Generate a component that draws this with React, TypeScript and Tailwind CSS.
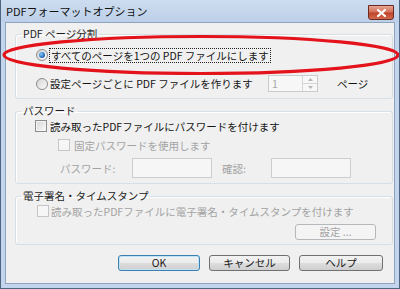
import type { ReactNode } from "react";

const FONT = "font-['Noto_Sans_CJK_JP','Noto_Sans',sans-serif]";

type BoxProps = {
  disabled?: boolean;
};

const CheckBox = ({ disabled }: BoxProps) => (
  <span
    className={
      disabled
        ? "w-[12px] h-[12px] shrink-0 border border-[#c6c6c6] bg-[#f6f6f6]"
        : "w-[12px] h-[12px] shrink-0 border border-[#8c8c8c] bg-gradient-to-br from-[#d6d6d6] to-[#fafafa] shadow-[inset_0_0_0_1px_#f4f4f4]"
    }
  />
);

const Radio = ({ checked }: { checked?: boolean }) => (
  <span className="w-[12px] h-[12px] shrink-0 rounded-full border border-[#8c8c8c] bg-gradient-to-br from-[#d4d4d4] to-[#fbfbfb] flex items-center justify-center">
    {checked && (
      <span className="w-[6px] h-[6px] rounded-full bg-[radial-gradient(circle_at_35%_35%,#8cc8f6_0%,#2f75c2_55%,#1b4e92_100%)]" />
    )}
  </span>
);

type GroupProps = {
  title: string;
  className: string;
  children: ReactNode;
};

const Group = ({ title, className, children }: GroupProps) => (
  <fieldset
    className={`ml-[9px] mr-[1px] border border-[#d5dfe5] rounded-[3px] shadow-[inset_1px_1px_0_#fff] ${className}`}
  >
    <legend className="ml-[5px] px-[2px] h-[12px] leading-[12px] text-[#1e1e1e]">
      {title}
    </legend>
    {children}
  </fieldset>
);

type BtnProps = {
  label: string;
  primary?: boolean;
  disabled?: boolean;
  width: string;
};

const Button = ({ label, primary, disabled, width }: BtnProps) => {
  let cls = "border-[#707070] bg-[linear-gradient(#f2f2f2_0%,#ebebeb_50%,#dddddd_51%,#cfcfcf_100%)] text-[#1a1a1a]";
  if (primary) {
    cls = "border-[#3c7fb1] bg-[linear-gradient(#f2f2f2_0%,#ebebeb_50%,#dddddd_51%,#cfcfcf_100%)] text-[#1a1a1a] shadow-[inset_0_0_0_1px_#bfe3f7]";
  }
  if (disabled) {
    cls = "border-[#b5b8ba] bg-[#f4f4f4] text-[#a3a3a3]";
  }
  return (
    <div
      className={`${width} h-[16px] border rounded-[3px] flex items-center justify-center leading-[12px] ${cls}`}
    >
      {label}
    </div>
  );
};

const App = () => {
  return (
    <div
      className={`relative w-[400px] h-[289px] overflow-hidden bg-[#c3d5ec] border-x border-b border-[#4f6580] flex flex-col text-[10.5px] ${FONT}`}
    >
      {/* title bar */}
      <div className="h-[22px] shrink-0 flex items-start pl-[5px] pr-[5px] bg-gradient-to-b from-[#cddcef] to-[#bdd0e9]">
        <span className="mt-[5px] text-[11px] leading-[13px] text-[#111]">PDFフォーマットオプション</span>
        <div className="ml-auto mt-[5px] w-[26px] h-[15px] rounded-b-[3px] border border-[#6a2a20] bg-[linear-gradient(#e8a593_0%,#d5705a_45%,#c0442a_55%,#d26a4f_100%)] flex items-center justify-center">
          <svg width="9" height="8" viewBox="0 0 9 8">
            <path d="M1 1 L8 7 M8 1 L1 7" stroke="#fff" strokeWidth="2.2" strokeLinecap="square" />
          </svg>
        </div>
      </div>

      {/* client area */}
      <div className="flex-1 mx-[4px] mb-[4px] bg-[#f0f0f0] border border-[#8fa3bd] flex flex-col">
        <Group title="PDF ページ分割" className="mt-[5px] pt-[7px] pb-[6px]">
          <div className="pl-[20px] flex flex-col">
            <div className="h-[16px] flex items-center">
              <Radio checked />
              <span className="ml-[1px] border border-dotted border-[#222] px-[1px] h-[15px] leading-[13px] text-[#151515]">
                すべてのページを1つの PDF ファイルにします
              </span>
            </div>
            <div className="mt-[12px] h-[17px] flex items-center">
              <Radio />
              <span className="ml-[2px] w-[218px] leading-[13px] text-[#151515]">
                設定ページごとに PDF ファイルを作ります
              </span>
              <div className="w-[50px] h-[17px] border border-[#c9cbcf] bg-[#f7f7f7] flex">
                <span className="flex-1 pl-[3px] leading-[15px] text-[#a8a8a8]">1</span>
                <div className="w-[15px] border-l border-[#d6d6d6] flex flex-col">
                  <div className="flex-1 flex items-center justify-center border-b border-[#d6d6d6]">
                    <svg width="5" height="3" viewBox="0 0 5 3">
                      <path d="M0 3 L2.5 0 L5 3 Z" fill="#b5b5b5" />
                    </svg>
                  </div>
                  <div className="flex-1 flex items-center justify-center">
                    <svg width="5" height="3" viewBox="0 0 5 3">
                      <path d="M0 0 L2.5 3 L5 0 Z" fill="#b5b5b5" />
                    </svg>
                  </div>
                </div>
              </div>
              <span className="ml-[19px] leading-[13px] text-[#151515]">ページ</span>
            </div>
          </div>
        </Group>

        <Group title="パスワード" className="mt-[6px] pt-[2px] pb-[5px]">
          <div className="pl-[19px] flex flex-col">
            <div className="h-[14px] flex items-center">
              <CheckBox />
              <span className="ml-[3px] leading-[13px] text-[#151515]">
                読み取ったPDFファイルにパスワードを付けます
              </span>
            </div>
            <div className="mt-[5px] h-[14px] pl-[23px] flex items-center">
              <CheckBox disabled />
              <span className="ml-[4px] leading-[13px] text-[#a3a3a3]">固定パスワードを使用します</span>
            </div>
            <div className="mt-[6px] h-[20px] pl-[25px] flex items-center text-[#a3a3a3]">
              <span className="w-[72px] leading-[13px]">パスワード:</span>
              <div className="w-[80px] h-[20px] border border-[#cbcdd1] bg-[#f6f6f6]" />
              <span className="ml-[10px] w-[49px] leading-[13px]">確認:</span>
              <div className="w-[80px] h-[20px] border border-[#cbcdd1] bg-[#f6f6f6]" />
            </div>
          </div>
        </Group>

        <Group title="電子署名・タイムスタンプ" className="mt-[6px] pt-[2px] pb-[4px]">
          <div className="pl-[21px] pr-[16px] flex flex-col">
            <div className="h-[14px] flex items-center">
              <CheckBox disabled />
              <span className="ml-[2px] leading-[13px] text-[#a3a3a3]">
                読み取ったPDFファイルに電子署名・タイムスタンプを付けます
              </span>
            </div>
            <div className="mt-[6px] flex justify-end">
              <Button label="設定 ..." disabled width="w-[81px]" />
            </div>
          </div>
        </Group>

        <div className="mt-[10px] pl-[112px] flex gap-[9px]">
          <Button label="OK" primary width="w-[82px]" />
          <Button label="キャンセル" width="w-[81px]" />
          <Button label="ヘルプ" width="w-[84px]" />
        </div>
      </div>

      {/* red annotation ring */}
      <svg
        className="absolute left-0 top-0 pointer-events-none"
        width="400"
        height="289"
        viewBox="0 0 400 289"
      >
        <ellipse cx="200" cy="55" rx="197" ry="18.5" fill="none" stroke="#e3121b" strokeWidth="3.2" />
      </svg>
    </div>
  );
};

export default App;
